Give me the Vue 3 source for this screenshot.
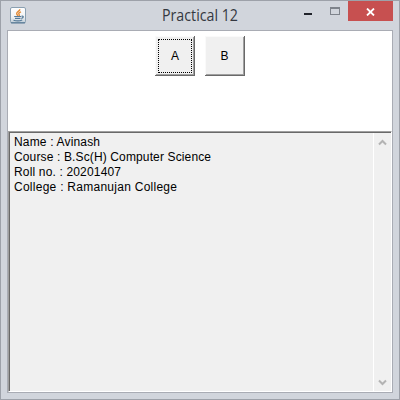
<script setup>
const lines = ['Name : Avinash', 'Course : B.Sc(H) Computer Science', 'Roll no. : 20201407', 'College : Ramanujan College']
const widths = [86, 197, 107, 163]
</script>

<template>
  <div class="window">
    <header class="titlebar">
      <svg class="java" width="16" height="17" viewBox="0 0 16 17">
        <defs>
          <linearGradient id="tile" x1="0" y1="0" x2="0" y2="1">
            <stop offset="0" stop-color="#fff" />
            <stop offset="0.6" stop-color="#f1f2f3" />
            <stop offset="1" stop-color="#bccbd6" />
          </linearGradient>
        </defs>
        <rect x="0.5" y="0.5" width="15" height="15.5" rx="1.5" fill="url(#tile)" stroke="#8ba0b1" />
        <path d="M1 15.8H15" stroke="#4f7390" />
        <path d="M9.8 2.2C10 4.2 6.5 4.6 6.7 6.6C6.8 7.6 7.5 8.2 7.9 8.8M11 4.8C8.7 5.7 8.2 6.6 9.2 7.6C9.7 8.3 9.3 8.7 8.9 9" fill="none" stroke="#e28a35" stroke-width="1.4" />
        <path d="M4.2 9.5H11M5 11.3H10.5M3.5 13.2C6 14 10 14 12.2 13M11.5 9.3C14 8.7 13.8 10.7 11.3 11.5" fill="none" stroke="#557a98" stroke-width="1.2" />
      </svg>
      <h1 class="title"><svg width="84" height="26"><text x="4" y="18" textLength="76" lengthAdjust="spacingAndGlyphs">Practical 12</text></svg></h1>
      <div class="controls">
        <span class="minimize"></span>
        <span class="maximize"></span>
        <span class="close">
          <svg width="9" height="8" viewBox="0 0 9 8"><path d="M1 0.5L8 7.5M8 0.5L1 7.5" stroke="#fff" stroke-width="1.8" /></svg>
        </span>
      </div>
    </header>
    <main class="client">
      <div class="buttons">
        <button class="btn focused"><span>A</span></button>
        <button class="btn"><span>B</span></button>
      </div>
      <section class="area">
        <div class="text">
          <svg v-for="(l, i) in lines" :key="i" class="line" width="300" height="15">
            <text x="0" y="11" :textLength="widths[i]">{{ l }}</text>
          </svg>
        </div>
        <div class="scroll">
          <svg width="9" height="7" viewBox="0 0 9 7"><path d="M1 5.5L4.5 2L8 5.5" /></svg>
          <svg width="9" height="7" viewBox="0 0 9 7"><path d="M1 1.5L4.5 5L8 1.5" /></svg>
        </div>
      </section>
    </main>
  </div>
</template>

<style>
body { margin: 0; overflow: hidden; }
</style>

<style scoped>
* { box-sizing: border-box; }
.window {
  width: 400px; height: 400px; background: #d1d5dc;
  border: 1px solid #9da1a9; padding: 0 6px 6px;
}
.titlebar { height: 29px; display: flex; align-items: flex-start; }
.java { margin: 6px 0 0 3px; flex: none; }
.title {
  margin: 2px 0 0 132px; width: 84px; height: 26px; flex: none;
  font: 400 15.5px "Open Sans", "Noto Sans", sans-serif;
}
.title svg { display: block; fill: #343840; overflow: visible; }
.controls { display: flex; margin-left: 62px; height: 20px; flex: none; }
.minimize { width: 8px; height: 2px; background: #20232a; margin-top: 12px; }
.maximize { width: 10px; height: 8px; border: 1px solid #7e838b; border-top-width: 2px; margin: 6px 8px 0 18px; }
.close { width: 45px; height: 20px; background: #c75050; display: flex; align-items: center; justify-content: center; padding-top: 1px; }
.client {
  width: 386px; height: 363px; background: #fff; border: 1px solid #a9acb4;
  display: flex; flex-direction: column;
}
.buttons { height: 100px; display: flex; justify-content: center; gap: 10px; padding: 5px 0 0 0; }
.btn {
  width: 40px; height: 40px; padding: 2px; background: #f0f0f0; border: 0;
  box-shadow: inset -1px -1px #696969, inset 1px 1px #fafafa, inset -2px -2px #a0a0a0;
  color: #000; font: 12px "Liberation Sans", Arial, sans-serif;
}
.btn span { display: flex; width: 35px; height: 36px; align-items: center; justify-content: center; }
.focused span { width: 34px; height: 34px; margin-left: 1px; border: 1px dotted #000; }
.area {
  flex: 1; display: flex; background: #f0f0f0;
  border-style: solid; border-width: 1px; border-color: #a0a0a0 #fff #fff #a0a0a0;
  box-shadow: inset 1px 1px #696969;
}
.text { flex: 1; padding: 3px 0 0 5px; font: 12px "Liberation Sans", Arial, sans-serif; }
.line { display: block; fill: #000; }
.scroll {
  width: 18px; border-left: 1px solid #fff; display: flex; flex-direction: column; margin-top: 1px;
  align-items: center; justify-content: space-between; padding: 6px 0 5px;
}
.scroll path { fill: none; stroke: #b3b3b3; stroke-width: 2; }
</style>
